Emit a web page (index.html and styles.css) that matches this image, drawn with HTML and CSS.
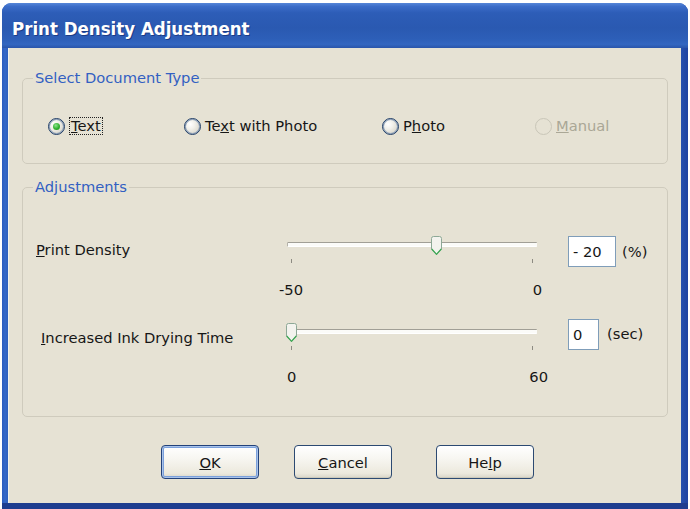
FILE: index.html
```html
<!DOCTYPE html>
<html>
<head>
<meta charset="utf-8">
<link rel="stylesheet" href="styles.css">
</head>
<body>
<div class="window">
  <div class="titlebar"><span class="title">Print Density Adjustment</span></div>
  <div class="client">
    <fieldset class="group group-doc">
      <legend>Select Document Type</legend>
      <div class="radios">
        <label class="opt"><span class="radio checked"></span><span class="focus"><u>T</u>ext</span></label>
        <label class="opt"><span class="radio"></span><span>Te<u>x</u>t with Photo</span></label>
        <label class="opt"><span class="radio"></span><span>P<u>h</u>oto</span></label>
        <label class="opt disabled"><span class="radio"></span><span><u>M</u>anual</span></label>
      </div>
    </fieldset>

    <fieldset class="group group-adj">
      <legend>Adjustments</legend>
      <div class="setting row1">
        <div class="lbl"><u>P</u>rint Density</div>
        <div class="slider">
          <div class="zone">
            <div class="track"></div>
            <svg class="thumb" style="--pos:0.6" width="11" height="19" viewBox="0 0 11 19"><path d="M0.5 2.5 Q0.5 0.5 2.5 0.5 H8.5 Q10.5 0.5 10.5 2.5 V13 L5.5 18.3 L0.5 13 Z" fill="#f3f3ee" stroke="#8da896"/><path d="M0.7 13 L5.5 18.3 L10.3 13" fill="none" stroke="#3aa852" stroke-width="1.2"/></svg>
          </div>
          <div class="ticks"><span></span><span></span></div>
          <div class="scale"><span>-50</span><span>0</span></div>
        </div>
        <div class="field"><div class="input wide">- 20</div><span class="unit">(%)</span></div>
      </div>
      <div class="setting row2">
        <div class="lbl"><u>I</u>ncreased Ink Drying Time</div>
        <div class="slider">
          <div class="zone">
            <div class="track"></div>
            <svg class="thumb" style="--pos:0" width="11" height="19" viewBox="0 0 11 19"><path d="M0.5 2.5 Q0.5 0.5 2.5 0.5 H8.5 Q10.5 0.5 10.5 2.5 V13 L5.5 18.3 L0.5 13 Z" fill="#f3f3ee" stroke="#8da896"/><path d="M0.7 13 L5.5 18.3 L10.3 13" fill="none" stroke="#3aa852" stroke-width="1.2"/></svg>
          </div>
          <div class="ticks"><span></span><span></span></div>
          <div class="scale"><span>0</span><span>60</span></div>
        </div>
        <div class="field"><div class="input narrow">0</div><span class="unit">(sec)</span></div>
      </div>
    </fieldset>

    <div class="buttons">
      <button class="btn default"><u>O</u>K</button>
      <button class="btn cancel"><u>C</u>ancel</button>
      <button class="btn help">He<u>l</u>p</button>
    </div>
  </div>
</div>
</body>
</html>
```

FILE: styles.css
```css
* { box-sizing: border-box; }
html, body {
  margin: 0;
  padding: 0;
  background: #ffffff;
  width: 690px;
  height: 509px;
  overflow: hidden;
}
body {
  font-family: "DejaVu Sans", "Liberation Sans", sans-serif;
  font-size: 14.7px;
  color: #161616;
}
.window {
  margin: 3px 2px 0 2px;
  height: 506px;
  border-radius: 9px 9px 0 0;
  background: linear-gradient(90deg, #2a5cbf 0, #3568c8 3px, #2f60bd 6px, #2d5eba 98%, #1f43a0 100%);
  padding: 0 7px 6px 6px;
  display: flex;
  flex-direction: column;
  box-shadow: inset 0 -6px 0 #1e3d8f;
}
.titlebar {
  height: 45px;
  margin: 0 -7px 0 -6px;
  border-radius: 9px 9px 0 0;
  background: linear-gradient(180deg, #5686d8 0, #3b6cc8 8%, #2d5db7 22%, #2a59b1 55%, #2d5fb8 80%, #3366c0 92%, #2a55aa 100%);
  padding: 5px 10px 0 10px;
  display: flex;
  align-items: center;
}
.title {
  font-family: "DejaVu Sans Condensed", "DejaVu Sans", sans-serif;
  font-stretch: condensed;
  font-weight: bold;
  font-size: 18.5px;
  color: #ffffff;
  text-shadow: 1px 1px 0 #1b3c86;
}
.client {
  flex: 1;
  background: #e6e2d4;
  display: flex;
  flex-direction: column;
  box-shadow: inset 1px 0 0 #f3f1ea;
}
.group {
  border: 1px solid #cfcbbd;
  border-radius: 5px;
  padding: 0;
  min-width: 0;
}
.group legend {
  color: #3260c2;
  line-height: 16px;
  padding: 0 2px;
  margin-left: 10px;
}
.group-doc {
  margin: 22px 13px 0 14px;
  padding: 31px 0 28px 0;
}
.radios {
  display: grid;
  grid-template-columns: 136px 198px 153px auto;
  padding-left: 25px;
  height: 18px;
  align-items: center;
}
.opt {
  display: flex;
  align-items: center;
  gap: 4px;
  line-height: 18px;
}
.radio {
  width: 17px;
  height: 17px;
  border-radius: 50%;
  border: 1px solid #1f3d66;
  background: radial-gradient(circle at 35% 35%, #ffffff 0, #f1f0ea 35%, #d3d0c3 85%);
  box-shadow: inset 0 0 0 1px #8fa2bb;
  display: flex;
  align-items: center;
  justify-content: center;
  flex: none;
}
.radio.checked::after {
  content: "";
  width: 7px;
  height: 7px;
  border-radius: 50%;
  background: radial-gradient(circle at 40% 35%, #8ee58e 0, #2fb12f 55%, #1d8d1d 100%);
}
.focus {
  border: 1px dotted #222;
  padding: 0 1px;
  line-height: 16px;
}
.disabled { color: #aaa796; }
.disabled .radio {
  border-color: #c9c6b8;
  background: #e6e2d4;
  box-shadow: none;
}

.group-adj {
  margin: 15px 13px 0 14px;
  padding: 40px 0 31px 0;
}
.setting {
  display: flex;
  align-items: flex-start;
  padding-left: 13px;
}
.row2 { margin-top: 24px; }
.lbl {
  width: 251px;
  line-height: 18px;
  margin-top: 6px;
}
.row2 .lbl { margin-top: 7px; padding-left: 5px; }
.slider {
  width: 250px;
  display: flex;
  flex-direction: column;
}
.zone {
  position: relative;
  height: 20px;
}
.track {
  margin-top: 7px;
  height: 5px;
  background: #fbfbf8;
  border-top: 1px solid #a19f96;
  border-left: 1px solid #b5b3aa;
  border-bottom: 1px solid #ffffff;
  border-radius: 1px;
}
.thumb {
  position: absolute;
  top: 1px;
  left: calc(var(--pos) * 242px - 1px);
}
.ticks {
  display: flex;
  justify-content: space-between;
  padding: 0 4px;
  margin-top: 4px;
  height: 4px;
}
.ticks span {
  width: 1px;
  height: 4px;
  background: #8d8b82;
}
.scale {
  display: flex;
  justify-content: space-between;
  margin-top: 19px;
  line-height: 16px;
}
.row1 .scale { margin-left: -8px; margin-right: -5px; }
.row2 .scale { margin-left: 0; margin-right: -11px; }
.field {
  display: flex;
  align-items: center;
  margin-left: 31px;
  margin-top: 1px;
}
.row2 .field { margin-top: -3px; }
.input {
  height: 31px;
  background: #ffffff;
  border: 1px solid #7f9db9;
  padding: 0 4px;
  line-height: 29px;
}
.input.wide { width: 48px; }
.input.narrow { width: 31px; }
.unit { margin-left: 6px; }
.row2 .unit { margin-left: 8px; margin-top: -2px; }

.buttons {
  display: flex;
  margin-top: 28px;
  padding-left: 153px;
}
.btn {
  font-family: inherit;
  font-size: inherit;
  color: #161616;
  width: 98px;
  height: 34px;
  padding: 0;
  border: 1px solid #2c4a72;
  border-radius: 4px;
  background: linear-gradient(180deg, #ffffff 0, #f7f6f1 40%, #ece9dd 85%, #d8d5c8 100%);
  box-shadow: inset 0 -1px 0 #cdcabb;
}
.btn.default {
  border-color: #23427a;
  box-shadow: inset 0 0 0 1px #a9c3ea, inset 0 0 0 2px #7ba0db;
}
.btn.cancel { margin-left: 35px; }
.btn.help { margin-left: 44px; }
```
